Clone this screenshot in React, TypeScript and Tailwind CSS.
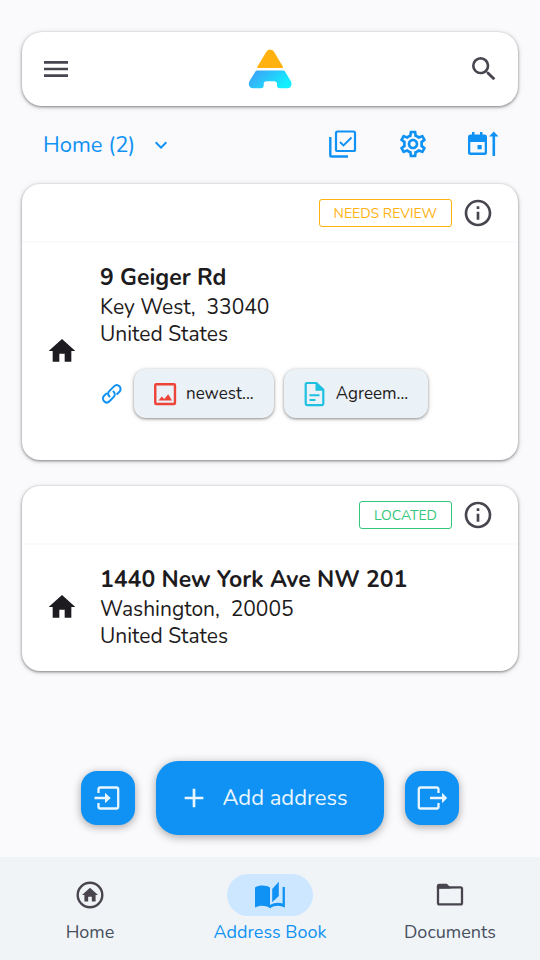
import React from "react";
import { MdMenu, MdSearch, MdOutlineSettings, MdHome, MdInfoOutline, MdExpandMore, MdAdd } from "react-icons/md";

type IconProps = { className?: string };

function Logo() {
  return (
    <svg viewBox="0 0 44 40" className="h-10 w-11" role="img" aria-label="Address app logo">
      <defs>
        <linearGradient id="logo-base" x1="0" y1="0" x2="1" y2="0.5">
          <stop offset="0.2" stopColor="#38aaf7" />
          <stop offset="1" stopColor="#12f0ff" />
        </linearGradient>
      </defs>
      <path fill="#ffb10f" d="M10.3 19c-1 0-1.300-.8-.8-1.600l8.700-14.400C19.200 1.400 20.400.8 22.200.8s3 .6 4 2.200l8.600 14.400c.5.8.2 1.600-.8 1.600z" />
      <path fill="url(#logo-base)" d="M9.200 21.500h26c.8 0 1.400.3 1.800 1l5.600 9.300c2.200 3.700.2 7.500-3.700 7.500h-7c-1.900 0-2.900-1-2.900-2.800v-1.500c0-1.800-1-2.700-2.800-2.700h-7.700c-1.800 0-2.800.9-2.800 2.700v1.500c0 1.800-1 2.800-2.900 2.800H5.300c-4 0-5.700-3.800-3.600-7.500l5.700-9.300c.4-.7 1-1 1.800-1z" />
    </svg>
  );
}

function SelectAllIcon({ className }: IconProps) {
  return (
    <svg viewBox="0 0 28 28" className={className} fill="none" stroke="currentColor" aria-hidden="true">
      <rect x="7" y="1.500" width="19" height="19.500" rx="1.500" strokeWidth="2.200" />
      <path d="M1.300 7v18.200c0 .8.500 1.300 1.300 1.300H19" strokeWidth="2.400" />
      <path d="m11 12 3.500 3.500 8-8" strokeWidth="1.900" />
    </svg>
  );
}

function DateSortIcon({ className }: IconProps) {
  return (
    <svg viewBox="0 0 32 28" className={className} fill="currentColor" aria-hidden="true">
      <path fillRule="evenodd" d="M5 2h2.500v2.500h5.500V2h2.500v2.500H17.500A2.500 2.500 0 0 1 20 7v15.500a2.500 2.500 0 0 1-2.500 2.500h-14A2.500 2.500 0 0 1 1 22.500V7a2.500 2.500 0 0 1 2.500-2.500H5zM3.300 12v10.500h14.400V12z" />
      <path d="M10.500 15h4.200v4.200h-4.200zM25.500 26V6.500H22L26.800 1.500l4.700 5H28.100V26z" />
    </svg>
  );
}

function LinkIcon({ className }: IconProps) {
  return (
    <svg viewBox="0 0 24 24" className={className} fill="none" stroke="currentColor" strokeWidth="2" strokeLinecap="round" aria-hidden="true">
      <path d="M9.500 14.500c-1.800-1.800-1.600-4 0-5.600l4.500-4.500c1.600-1.600 3.900-1.600 5.400-.100s1.600 3.900 0 5.500l-2.200 2.200" />
      <path d="M13.500 9.500c1.800 1.800 1.600 4 0 5.600L9.500 19.200c-1.600 1.600-3.900 1.600-5.400.1s-1.600-3.900 0-5.500l2.200-2.200" />
    </svg>
  );
}

function ImageIcon({ className }: IconProps) {
  return (
    <svg viewBox="0 0 24 24" className={className} aria-hidden="true">
      <rect x="3" y="3" width="18.200" height="18.200" rx="1" fill="none" stroke="currentColor" strokeWidth="2.200" />
      <path fill="currentColor" d="m6 18 3-3.800 2.300 2.300 3.700-4.300L18.500 18z" />
    </svg>
  );
}

function FileIcon({ className }: IconProps) {
  return (
    <svg viewBox="0 0 24 26" className={className} aria-hidden="true">
      <path d="M4 2h9.300l7 6.800v14c0 .8-.5 1.300-1.300 1.300H4c-.8 0-1.300-.5-1.300-1.300V3.300C2.700 2.500 3.200 2 4 2z" fill="none" stroke="currentColor" strokeWidth="2.200" />
      <path d="M6.500 14.200h10M6.500 19h6" fill="none" stroke="currentColor" strokeWidth="2" />
      <path d="M12.500 2v7.700h8z" fill="currentColor" />
    </svg>
  );
}

function ImportIcon({ className }: IconProps) {
  return (
    <svg viewBox="0 0 30 26" className={className} aria-hidden="true">
      <path d="M5.500 8V4.300C5.500 3 6.200 2.500 7.300 2.500h16c1.200 0 1.900.6 1.900 1.800v17.400c0 1.200-.7 1.800-1.900 1.800h-16c-1.200 0-1.800-.6-1.800-1.800V18" fill="none" stroke="currentColor" strokeWidth="2.300" />
      <path d="M1.500 11.700h10.500V7.800l5.700 5.200-5.700 5.200v-3.900H1.500z" fill="currentColor" />
    </svg>
  );
}

function ExportIcon({ className }: IconProps) {
  return (
    <svg viewBox="0 0 32 26" className={className} aria-hidden="true">
      <path d="M22.500 8V4.300c0-1.200-.6-1.800-1.800-1.800h-16c-1.200 0-1.900.6-1.900 1.800v17.400c0 1.200.7 1.800 1.900 1.800h16c1.200 0 1.800-.6 1.800-1.800V18" fill="none" stroke="currentColor" strokeWidth="2.300" />
      <path d="M14 11.700h12V7.800l5.200 5.200-5.200 5.200v-3.900H14z" fill="currentColor" />
    </svg>
  );
}

function HomeCircleIcon({ className }: IconProps) {
  return (
    <svg viewBox="0 0 28 28" className={className} aria-hidden="true">
      <circle cx="14" cy="14" r="12.300" fill="none" stroke="currentColor" strokeWidth="2.400" />
      <path fill="currentColor" d="m14 6.700 8 7.200h-2.400v6.500h-3.800v-4.700h-3.600v4.700H8.400v-6.500H6z" />
    </svg>
  );
}

function BookIcon({ className }: IconProps) {
  return (
    <svg viewBox="0 0 32 28" className={className} fill="currentColor" aria-hidden="true">
      <path d="M1 6.500C5.500 3.800 11.500 3.900 16 6.500v17.400c4.200-2.300 8.700-2.700 12.600-1.300V6h2.300v20.400c-5-2.300-10.200-2.200-14.900.8-4.600-3-10-3.100-15-.8z" />
      <path d="M18.200 8 24.800.8V15l-6.600 6.200z" />
    </svg>
  );
}

function FolderIcon({ className }: IconProps) {
  return (
    <svg viewBox="0 0 28 24" className={className} aria-hidden="true">
      <path d="M2 4.500v15.400c0 .9.500 1.400 1.400 1.400h21.200c.9 0 1.400-.5 1.400-1.400V5.800c0-.9-.5-1.400-1.400-1.400z" fill="none" stroke="currentColor" strokeWidth="2.300" />
      <path d="M.9 5.600V3c0-1.500.8-2.200 2.300-2.200h7.600l3 3 .9 1.800z" fill="currentColor" />
    </svg>
  );
}

const cardShadow = "shadow-[0_1px_3px_rgba(0,0,0,0.45),0_1px_6px_rgba(0,0,0,0.12)]";

function Attachment({ icon, label }: { icon: React.ReactNode; label: string }) {
  return (
    <button className="flex h-[49px] items-center gap-2 rounded-xl bg-[#eaf1f7] pr-5 pl-[18px] text-[17px] text-[#1d1b20] shadow-[0_1px_3px_rgba(0,0,0,0.4),0_1px_6px_rgba(0,0,0,0.1)]">
      {icon}
      {label}
    </button>
  );
}

type AddressProps = {
  status: string;
  statusClass: string;
  street: string;
  city: string;
  zip: string;
  children?: React.ReactNode;
};

function AddressCard({ status, statusClass, street, city, zip, children }: AddressProps) {
  return (
    <article className={`rounded-[18px] bg-white ${cardShadow}`}>
      <header className="flex h-[59px] items-center justify-end gap-2.5 border-b-2 border-[#fafafc] pr-6">
        <span className={`flex h-7 items-center rounded-[3px] border px-3.5 pt-0.5 text-sm ${statusClass}`}>{status}</span>
        <button aria-label="Address details" className="text-[#49454f]">
          <MdInfoOutline className="size-8" />
        </button>
      </header>
      <div className="flex items-center gap-[22px] pt-[19px] pr-4 pb-[21px] pl-6">
        <MdHome className="size-8 shrink-0 text-[#1d1b20]" />
        <div className="min-w-0 flex-1 text-[#1d1b20]">
          <h2 className="text-[23px] leading-8 font-bold">{street}</h2>
          <p className="text-[21px] leading-[27px] whitespace-pre-wrap">{`${city},  ${zip}`}</p>
          <p className="text-[21px] leading-[27px]">United States</p>
          {children}
        </div>
      </div>
    </article>
  );
}

function NavItem({ label, icon, active = false }: { label: string; icon: React.ReactNode; active?: boolean }) {
  return (
    <a href="#" aria-current={active ? "page" : undefined} className={`flex flex-1 flex-col items-center text-lg leading-8 ${active ? "text-[#0f92f3]" : "text-[#49454f]"}`}>
      <span className={`flex h-[42px] w-[86px] items-center justify-center rounded-full ${active ? "bg-[#cce7ff]" : ""}`}>{icon}</span>
      <span className={active ? "" : "text-[#474f5e]"}>{label}</span>
    </a>
  );
}

export default function App() {
  return (
    <div className="flex min-h-screen flex-col bg-[#fafafd] font-['Nunito','Open_Sans',sans-serif]">
      <div className="px-[22px] pt-8">
        <header className={`grid h-[74px] grid-cols-3 items-center rounded-[20px] bg-white px-[18px] ${cardShadow}`}>
          <button aria-label="Menu" className="justify-self-start text-[#49454f]">
            <MdMenu className="size-8" />
          </button>
          <div className="justify-self-center">
            <Logo />
          </div>
          <button aria-label="Search" className="justify-self-end text-[#49454f]">
            <MdSearch className="size-8" />
          </button>
        </header>
      </div>

      <div className="flex h-[78px] items-center justify-between pr-[41px] pb-0.5 pl-[43px] text-[#0f92f3]">
        <button className="flex items-center gap-3.5 pt-0.5 text-[22px]">
          Home (2)
          <MdExpandMore className="size-6" />
        </button>
        <div className="flex items-center gap-[38px]">
          <button aria-label="Select addresses" className="flex w-8 justify-center">
            <SelectAllIcon className="size-7" />
          </button>
          <button aria-label="Settings">
            <MdOutlineSettings className="size-8" />
          </button>
          <button aria-label="Sort by date">
            <DateSortIcon className="h-7 w-8" />
          </button>
        </div>
      </div>

      <main className="flex flex-col gap-[26px] px-[22px]">
        <AddressCard status="NEEDS REVIEW" statusClass="border-[#ffb10f] text-[#ffb10f]" street="9 Geiger Rd" city="Key West" zip="33040">
          <div className="mt-[21px] mb-[21px] flex items-center gap-2.5">
            <LinkIcon className="size-6 text-[#0f92f3]" />
            <Attachment icon={<ImageIcon className="size-[26px] text-[#ee4337]" />} label="newest..." />
            <Attachment icon={<FileIcon className="size-[26px] text-[#1fc0e0]" />} label="Agreem..." />
          </div>
        </AddressCard>
        <AddressCard status="LOCATED" statusClass="border-[#34c77b] text-[#34c77b]" street="1440 New York Ave NW 201" city="Washington" zip="20005" />
      </main>

      <div className="mt-auto flex items-center justify-center gap-[21px] pt-6 pb-[22px] text-[#eaf6ff]">
        <button aria-label="Import addresses" className="flex size-[54px] items-center justify-center rounded-2xl bg-[#0f92f3] shadow-[0_2px_8px_rgba(0,0,0,0.35)]">
          <ImportIcon className="h-[26px] w-[30px]" />
        </button>
        <button className="flex h-[74px] items-center gap-3 rounded-[22px] bg-[#0f92f3] pr-9 pl-[22px] text-[22px] shadow-[0_2px_10px_rgba(0,0,0,0.35)]">
          <MdAdd className="size-8" />
          Add address
        </button>
        <button aria-label="Export addresses" className="flex size-[54px] items-center justify-center rounded-2xl bg-[#0f92f3] shadow-[0_2px_8px_rgba(0,0,0,0.35)]">
          <ExportIcon className="h-[26px] w-8" />
        </button>
      </div>

      <nav aria-label="Main" className="flex h-[103px] bg-[#f0f4f7] pt-[17px]">
        <NavItem label="Home" icon={<HomeCircleIcon className="size-7" />} />
        <NavItem label="Address Book" active icon={<BookIcon className="h-7 w-8" />} />
        <NavItem label="Documents" icon={<FolderIcon className="h-6 w-7" />} />
      </nav>
    </div>
  );
}
